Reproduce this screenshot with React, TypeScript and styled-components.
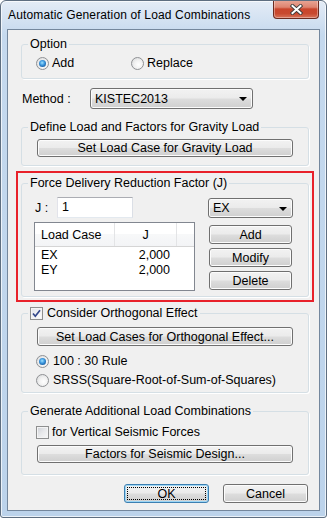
import styled, { createGlobalStyle } from "styled-components";

const GlobalStyle = createGlobalStyle`
  html, body {
    margin: 0;
    padding: 0;
    background: #ffffff;
  }
  body {
    font-family: "Liberation Sans", Arial, sans-serif;
    font-size: 12.5px;
    color: #000;
  }
  * {
    box-sizing: border-box;
  }
`;

const App = () => {
  return (
    <>
      <GlobalStyle />
      <Window>
        <TitleBar>
          <Title>Automatic Generation of Load Combinations</Title>
          <CloseButton>
            <svg width="13" height="11" viewBox="0 0 13 11">
              <path d="M2.5 2 L10.5 9 M10.5 2 L2.5 9" stroke="#3b3b3b" strokeWidth="3.8" strokeLinecap="square" />
              <path d="M2.5 2 L10.5 9 M10.5 2 L2.5 9" stroke="#ffffff" strokeWidth="2" strokeLinecap="square" />
            </svg>
          </CloseButton>
        </TitleBar>

        <Client>
          <Group $top={7}>
            <Legend>Option</Legend>
            <OptionRow>
              <OptionItem $w={95}>
                <Radio $on />
                <span>Add</span>
              </OptionItem>
              <OptionItem>
                <Radio />
                <span>Replace</span>
              </OptionItem>
            </OptionRow>
          </Group>

          <MethodRow>
            <FieldLabel $w={69}>Method :</FieldLabel>
            <Combo $w={163}>
              <span>KISTEC2013</span>
              <Arrow />
            </Combo>
          </MethodRow>

          <Group $top={11}>
            <Legend>Define Load and Factors for Gravity Load</Legend>
            <GroupBody $pad="5px 15px 8px 14px">
              <WideButton>Set Load Case for Gravity Load</WideButton>
            </GroupBody>
          </Group>

          <Highlight>
            <Group $top={0}>
              <Legend>Force Delivery Reduction Factor (J)</Legend>
              <FactorGrid>
                <div>
                  <JRow>
                    <FieldLabel $w={23}>J :</FieldLabel>
                    <TextBox>1</TextBox>
                  </JRow>
                  <ListView>
                    <ListHeader>
                      <HeadCell>Load Case</HeadCell>
                      <HeadCell $center>J</HeadCell>
                      <HeadCell />
                    </ListHeader>
                    <ListRow>
                      <Cell>EX</Cell>
                      <Cell $right>2,000</Cell>
                    </ListRow>
                    <ListRow>
                      <Cell>EY</Cell>
                      <Cell $right>2,000</Cell>
                    </ListRow>
                  </ListView>
                </div>
                <SideColumn>
                  <Combo $w={85} $h={20}>
                    <span>EX</span>
                    <Arrow />
                  </Combo>
                  <SideButtons>
                    <Button $w={83}>Add</Button>
                    <Button $w={83}>Modify</Button>
                    <Button $w={83}>Delete</Button>
                  </SideButtons>
                </SideColumn>
              </FactorGrid>
            </Group>
          </Highlight>

          <Group $top={4}>
            <Legend>
              <CheckBox $on>
                <svg width="11" height="11" viewBox="0 0 11 11">
                  <path d="M2 5.5 L4.3 8.2 L9 2.2" fill="none" stroke="#33478a" strokeWidth="1.7" />
                </svg>
              </CheckBox>
              <span>Consider Orthogonal Effect</span>
            </Legend>
            <GroupBody $pad="7px 15px 4px 14px">
              <WideButton $h={19}>Set Load Cases for Orthogonal Effect...</WideButton>
              <RadioList>
                <OptionItem $gap={4}>
                  <Radio $on />
                  <span>100 : 30 Rule</span>
                </OptionItem>
                <OptionItem $gap={4}>
                  <Radio />
                  <span>SRSS(Square-Root-of-Sum-of-Squares)</span>
                </OptionItem>
              </RadioList>
            </GroupBody>
          </Group>

          <Group $top={11}>
            <Legend>Generate Additional Load Combinations</Legend>
            <GroupBody $pad="6px 15px 11px 14px">
              <OptionItem $gap={3}>
                <CheckBox />
                <span>for Vertical Seismic Forces</span>
              </OptionItem>
              <WideButton $top={5}>Factors for Seismic Design...</WideButton>
            </GroupBody>
          </Group>

          <Footer>
            <Button $w={85} $primary>OK</Button>
            <Button $w={85}>Cancel</Button>
          </Footer>
        </Client>
      </Window>
    </>
  );
};

const Window = styled.div`
  width: 327px;
  height: 518px;
  display: flex;
  flex-direction: column;
  border: 1px solid #5e6e80;
  border-radius: 6px 6px 3px 3px;
  background: linear-gradient(#e4ecf6 0px, #d4e2f2 18px, #c5d9ee 34px, #bcd3eb 100%);
  box-shadow: inset 0 0 0 1px rgba(255, 255, 255, 0.7);
  overflow: hidden;
`;

const TitleBar = styled.div`
  height: 28px;
  flex-shrink: 0;
  display: flex;
  align-items: flex-start;
  padding-left: 7px;
`;

const Title = styled.div`
  font-size: 12px;
  letter-spacing: 0.15px;
  line-height: 28px;
  color: #000;
`;

const CloseButton = styled.div`
  margin-left: auto;
  margin-right: 7px;
  margin-top: -1px;
  width: 46px;
  height: 19px;
  display: flex;
  align-items: center;
  justify-content: center;
  border: 1px solid #6b2b20;
  border-top: none;
  border-radius: 0 0 4px 4px;
  background: linear-gradient(#e9a898 0%, #de8470 40%, #c9452c 50%, #c8492f 75%, #d8735a 100%);
  box-shadow: inset 0 0 0 1px rgba(255, 255, 255, 0.35);
`;

const Client = styled.div`
  flex: 1;
  margin: 0 6px 6px 6px;
  border: 1px solid #74879d;
  background: #f0f0f0;
  padding: 0 10px 0 13px;
  display: flex;
  flex-direction: column;
`;

const Group = styled.fieldset<{ $top: number }>`
  margin: ${(p) => p.$top}px 0 0 0;
  padding: 0;
  min-width: 0;
  border: 1px solid #d5dfe5;
  border-radius: 3px;
  box-shadow: 1px 1px 0 #ffffff;
`;

const Legend = styled.legend`
  margin-left: 6px;
  padding: 0 2px;
  line-height: 14px;
  height: 14px;
  display: flex;
  align-items: center;
  gap: 4px;
  white-space: nowrap;
`;

const GroupBody = styled.div<{ $pad: string }>`
  padding: ${(p) => p.$pad};
  display: flex;
  flex-direction: column;
`;

const OptionRow = styled.div`
  display: flex;
  padding: 4px 0 7px 14px;
`;

const OptionItem = styled.label<{ $w?: number; $gap?: number }>`
  display: flex;
  align-items: center;
  gap: ${(p) => p.$gap ?? 3}px;
  height: 16px;
  width: ${(p) => (p.$w ? `${p.$w}px` : "auto")};
`;

const Radio = styled.span<{ $on?: boolean }>`
  width: 13px;
  height: 13px;
  border-radius: 50%;
  border: 1px solid #8f9194;
  background: radial-gradient(circle at 60% 60%, #ffffff 0%, #f1f1f1 45%, #d2d4d6 100%);
  display: flex;
  align-items: center;
  justify-content: center;
  flex-shrink: 0;
  &::after {
    content: "";
    display: ${(p) => (p.$on ? "block" : "none")};
    width: 7px;
    height: 7px;
    border-radius: 50%;
    background: radial-gradient(circle at 45% 40%, #9fe2ff 0%, #3f9ae0 40%, #175a9e 80%, #0e3c70 100%);
  }
`;

const CheckBox = styled.span<{ $on?: boolean }>`
  width: 13px;
  height: 13px;
  border: 1px solid #8e8f8f;
  background: linear-gradient(135deg, #cdd0d6 0%, #e8e9eb 50%, #f8f8f8 100%);
  box-shadow: inset 0 0 0 1px #f4f4f4;
  display: flex;
  align-items: center;
  justify-content: center;
  flex-shrink: 0;
  ${(p) => (p.$on ? "background: linear-gradient(135deg, #e1e3e8 0%, #f4f4f5 60%, #ffffff 100%);" : "")}
`;

const MethodRow = styled.div`
  display: flex;
  align-items: center;
  margin-top: 9px;
  height: 21px;
`;

const FieldLabel = styled.span<{ $w: number }>`
  width: ${(p) => p.$w}px;
  padding-left: 1px;
  flex-shrink: 0;
`;

const Combo = styled.div<{ $w: number; $h?: number }>`
  width: ${(p) => p.$w}px;
  height: ${(p) => p.$h ?? 21}px;
  border: 1px solid #707070;
  border-radius: 3px;
  background: linear-gradient(#f2f2f2 0%, #ebebeb 48%, #dddddd 52%, #cfcfcf 100%);
  box-shadow: inset 0 0 0 1px #fbfbfb;
  display: flex;
  align-items: center;
  justify-content: space-between;
  padding: 0 5px 0 4px;
`;

const Arrow = styled.span`
  width: 0;
  height: 0;
  border-left: 4px solid transparent;
  border-right: 4px solid transparent;
  border-top: 4px solid #000;
  margin-top: 1px;
`;

const ButtonBase = styled.button`
  font: inherit;
  color: #000;
  padding: 0;
  border: 1px solid #707070;
  border-radius: 3px;
  background: linear-gradient(#f2f2f2 0%, #ebebeb 48%, #dddddd 52%, #cfcfcf 100%);
  box-shadow: inset 0 0 0 1px #fcfcfc;
  display: flex;
  align-items: center;
  justify-content: center;
  position: relative;
`;

const Button = styled(ButtonBase)<{ $w: number; $primary?: boolean }>`
  width: ${(p) => p.$w}px;
  height: 19px;
  ${(p) =>
    p.$primary
      ? `
    border-color: #3c7fb1;
    box-shadow: inset 0 0 0 1px #9cd6f5;
    &::after {
      content: "";
      position: absolute;
      inset: 2px;
      border: 1px dotted #000;
    }
  `
      : ""}
`;

const WideButton = styled(ButtonBase)<{ $h?: number; $top?: number }>`
  height: ${(p) => p.$h ?? 18}px;
  margin: ${(p) => p.$top ?? 0}px 0 0 1px;
`;

const Highlight = styled.div`
  margin: 5px -5px 0 -5px;
  border: 2px solid #e8212a;
  padding: 3px;
`;

const FactorGrid = styled.div`
  display: grid;
  grid-template-columns: 161px 85px;
  column-gap: 13px;
  padding: 7px 0 5px 12px;
`;

const JRow = styled.div`
  display: flex;
  align-items: center;
  height: 21px;
`;

const TextBox = styled.div`
  width: 76px;
  height: 21px;
  border: 1px solid #abadb3;
  border-color: #abadb3 #dbdfe6 #e3e9ef #e2e3ea;
  background: #fff;
  padding-left: 4px;
  line-height: 19px;
`;

const ListView = styled.div`
  margin-top: 4px;
  height: 69px;
  border: 1px solid #828790;
  background: #fff;
`;

const ListHeader = styled.div`
  display: grid;
  grid-template-columns: 80px 62px 1fr;
  height: 24px;
  border-bottom: 1px solid #d5d5d5;
  background: linear-gradient(#ffffff 0%, #ffffff 50%, #f7f8f9 50%, #f3f4f6 100%);
  margin-bottom: 1px;
`;

const HeadCell = styled.div<{ $center?: boolean }>`
  display: flex;
  align-items: center;
  justify-content: ${(p) => (p.$center ? "center" : "flex-start")};
  padding-left: ${(p) => (p.$center ? 0 : 6)}px;
  border-right: 1px solid #e3e4e6;
  &:last-child {
    border-right: none;
  }
`;

const ListRow = styled.div`
  display: grid;
  grid-template-columns: 80px 62px;
  height: 15px;
  line-height: 15px;
`;

const Cell = styled.div<{ $right?: boolean }>`
  text-align: ${(p) => (p.$right ? "right" : "left")};
  padding: ${(p) => (p.$right ? "0 7px 0 0" : "0 0 0 6px")};
`;

const SideColumn = styled.div`
  display: flex;
  flex-direction: column;
  padding-top: 1px;
`;

const SideButtons = styled.div`
  display: flex;
  flex-direction: column;
  gap: 4px;
  margin: 7px 0 0 1px;
`;

const RadioList = styled.div`
  display: flex;
  flex-direction: column;
  gap: 3px;
  margin-top: 7px;
`;

const Footer = styled.div`
  display: flex;
  justify-content: flex-end;
  gap: 14px;
  margin-top: 9px;
  padding-right: 1px;
`;

export default App;
